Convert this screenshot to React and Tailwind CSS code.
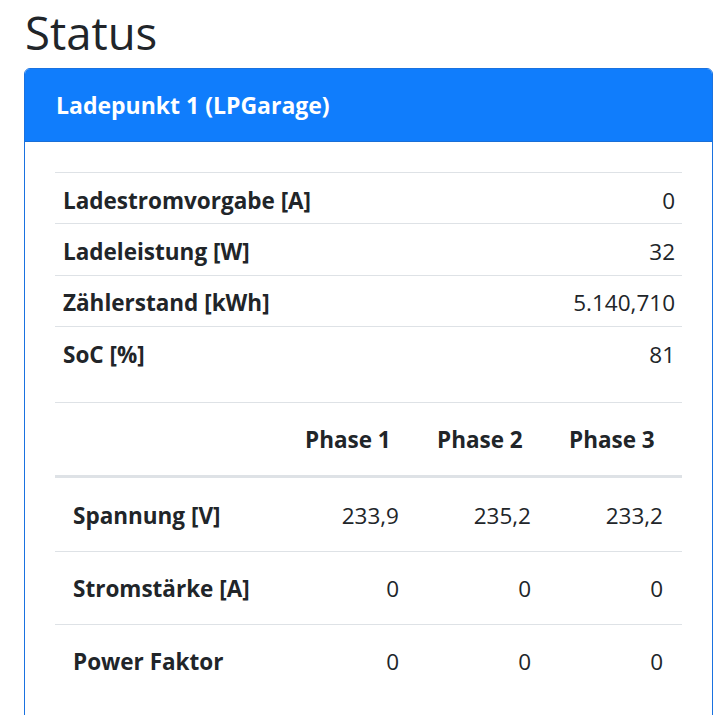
export default function App() {
  const rows1 = [
    ["Ladestromvorgabe [A]", "0"],
    ["Ladeleistung [W]", "32"],
    ["Zählerstand [kWh]", "5.140,710"],
    ["SoC [%]", "81"],
  ];
  const rows2 = [
    ["Spannung [V]", "233,9", "235,2", "233,2"],
    ["Stromstärke [A]", "0", "0", "0"],
    ["Power Faktor", "0", "0", "0"],
  ];
  return (
    <div
      className="bg-white text-[#212529] pl-[24px] pr-[5px] min-h-[715px]"
      style={{ fontFamily: '"Open Sans", "Noto Sans", sans-serif' }}
    >
      <h1 className="text-[45.5px] leading-[66px] font-normal pl-[1px] -mt-[1px]">Status</h1>
      <div className="mt-[3px] border border-[#1a72e0] rounded-t-[6px] overflow-hidden">
        <div className="bg-[#107dfc] h-[73px] flex items-center pl-[31px] border-b border-[#1a6fd6]">
          <span className="text-white font-bold text-[23px]">Ladepunkt 1 (LPGarage)</span>
        </div>
        <div className="px-[30px] pt-[30px] pb-[40px] text-[22.5px]">
          <div>
            {rows1.map(([l, v]) => (
              <div key={l} className="flex items-center justify-between h-[51.3px] pt-[5px] border-t border-[#dee2e6]">
                <span className="font-bold pl-[8px]">{l}</span>
                <span className="pr-[7px]">{v}</span>
              </div>
            ))}
          </div>
          <div className="mt-[25px]">
            <div className="grid grid-cols-[231px_1fr_1fr_1fr] h-[76px] pt-[2px] items-center border-t border-[#dee2e6] border-b-[3px] border-b-[#dee2e6] font-bold">
              <span></span>
              <span className="pl-[19px]">Phase 1</span>
              <span className="pl-[19px]">Phase 2</span>
              <span className="pl-[19px]">Phase 3</span>
            </div>
            {rows2.map(([l, a, b, c], i) => (
              <div
                key={l}
                className={
                  "grid grid-cols-[231px_1fr_1fr_1fr] h-[72.7px] pt-[3px] items-center " +
                  (i > 0 ? "border-t border-[#dee2e6]" : "")
                }
              >
                <span className="font-bold pl-[18px]">{l}</span>
                <span className="text-right pr-[19px]">{a}</span>
                <span className="text-right pr-[19px]">{b}</span>
                <span className="text-right pr-[19px]">{c}</span>
              </div>
            ))}
          </div>
        </div>
      </div>
    </div>
  );
}
